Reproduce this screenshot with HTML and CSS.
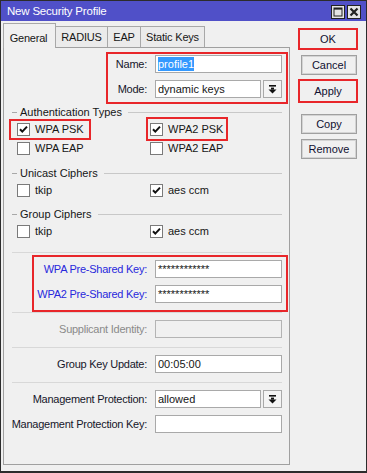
FILE: index.html
```html
<!DOCTYPE html>
<html lang="en">
<head>
    <meta charset="UTF-8">
    <title>New Security Profile</title>
    <link rel="stylesheet" href="styles.css">
</head>
<body>
    <div class="window">
        <div class="titlebar">
            <span class="title">New Security Profile</span>
            <div class="title-btns">
                <span class="tbtn"><svg width="12" height="12" viewBox="0 0 12 12"><rect x="2" y="2" width="8" height="8" fill="none" stroke="#222" stroke-width="1"/><rect x="2" y="2" width="8" height="1.6" fill="#222"/></svg></span>
                <span class="tbtn"><svg width="12" height="12" viewBox="0 0 12 12"><path d="M2.5 2.5 L9.5 9.5 M9.5 2.5 L2.5 9.5" stroke="#222" stroke-width="2.2"/></svg></span>
            </div>
        </div>

        <div class="body">
            <div class="main">
                <div class="tabs">
                    <div class="tab active" style="width:53px">General</div>
                    <div class="tab" style="width:53px">RADIUS</div>
                    <div class="tab" style="width:34px">EAP</div>
                    <div class="tab" style="width:65px">Static Keys</div>
                </div>

                <div class="panel">
                    <!-- name / mode -->
                    <div class="mark-box box-top">
                        <div class="row">
                            <label>Name:</label>
                            <div class="input"><span class="sel">profile1</span></div>
                        </div>
                        <div class="row">
                            <label>Mode:</label>
                            <div class="select">
                                <div class="input">dynamic keys</div>
                                <span class="drop"><svg width="9" height="9" viewBox="0 0 9 9"><rect x="1" y="0" width="7" height="1.6" fill="#111"/><rect x="3" y="2.6" width="3" height="2" fill="#111"/><path d="M0.5 4.4 L8.5 4.4 L4.5 8.6 Z" fill="#111"/></svg></span>
                            </div>
                        </div>
                    </div>

                    <div class="group-head"><span class="dash"></span><span class="gtext">Authentication Types</span><span class="gline"></span></div>
                    <div class="checks">
                        <span class="check mark1"><span class="box on"><svg width="11" height="11" viewBox="0 0 11 11"><path d="M2 5.2 L4.3 7.6 L9 2.6" fill="none" stroke="#111" stroke-width="2"/></svg></span>WPA PSK</span>
                        <span class="check mark2"><span class="box on"><svg width="11" height="11" viewBox="0 0 11 11"><path d="M2 5.2 L4.3 7.6 L9 2.6" fill="none" stroke="#111" stroke-width="2"/></svg></span>WPA2 PSK</span>
                        <span class="check"><span class="box"></span>WPA EAP</span>
                        <span class="check"><span class="box"></span>WPA2 EAP</span>
                    </div>

                    <div class="group-head gap7"><span class="dash"></span><span class="gtext">Unicast Ciphers</span><span class="gline"></span></div>
                    <div class="checks">
                        <span class="check"><span class="box"></span>tkip</span>
                        <span class="check"><span class="box on"><svg width="11" height="11" viewBox="0 0 11 11"><path d="M2 5.2 L4.3 7.6 L9 2.6" fill="none" stroke="#111" stroke-width="2"/></svg></span>aes ccm</span>
                    </div>

                    <div class="group-head gap6"><span class="dash"></span><span class="gtext">Group Ciphers</span><span class="gline"></span></div>
                    <div class="checks">
                        <span class="check"><span class="box"></span>tkip</span>
                        <span class="check"><span class="box on"><svg width="11" height="11" viewBox="0 0 11 11"><path d="M2 5.2 L4.3 7.6 L9 2.6" fill="none" stroke="#111" stroke-width="2"/></svg></span>aes ccm</span>
                    </div>

                    <div class="sep first"></div>

                    <!-- pre-shared keys -->
                    <div class="mark-box box-keys">
                        <div class="row">
                            <label class="blue">WPA Pre-Shared Key:</label>
                            <div class="input">************</div>
                        </div>
                        <div class="row">
                            <label class="blue">WPA2 Pre-Shared Key:</label>
                            <div class="input">************</div>
                        </div>
                    </div>

                    <div class="sep flush"></div>
                    <div class="row plain">
                        <label class="gray">Supplicant Identity:</label>
                        <div class="input disabled"></div>
                    </div>

                    <div class="sep"></div>
                    <div class="row plain">
                        <label>Group Key Update:</label>
                        <div class="input">00:05:00</div>
                    </div>

                    <div class="sep"></div>
                    <div class="row plain">
                        <label>Management Protection:</label>
                        <div class="select">
                            <div class="input">allowed</div>
                            <span class="drop"><svg width="9" height="9" viewBox="0 0 9 9"><rect x="1" y="0" width="7" height="1.6" fill="#111"/><rect x="3" y="2.6" width="3" height="2" fill="#111"/><path d="M0.5 4.4 L8.5 4.4 L4.5 8.6 Z" fill="#111"/></svg></span>
                        </div>
                    </div>
                    <div class="row plain">
                        <label>Management Protection Key:</label>
                        <div class="input"></div>
                    </div>
                </div>
            </div>

            <div class="side">
                <div class="btn marked ok">OK</div>
                <div class="btn">Cancel</div>
                <div class="btn marked apply">Apply</div>
                <div class="btn spaced">Copy</div>
                <div class="btn">Remove</div>
            </div>
        </div>
    </div>
</body>
</html>
```

FILE: styles.css
```css
body { margin: 0; font-family: "Liberation Sans", Arial, sans-serif; font-size: 11px; color: #161616; background: #f0f0f0; }
.window { width: 367px; height: 473px; box-sizing: border-box; border: 1px solid #2c2c2c; border-bottom-width: 2px; background: #f0f0f0; display: flex; flex-direction: column; }

.titlebar { height: 20px; background: #5050c8; display: flex; justify-content: space-between; align-items: flex-start; padding: 0 5px 0 6px; }
.title { color: #fff; font-size: 11.5px; letter-spacing: -0.2px; line-height: 21px; }
.title-btns { display: flex; gap: 2px; padding-top: 4px; }
.tbtn { width: 14px; height: 14px; box-sizing: border-box; border: 1px solid #222; background: #e4e4e4; display: flex; align-items: center; justify-content: center; }

.body { display: flex; }
.main { margin-left: 2px; padding-top: 2px; }
.tabs { display: flex; align-items: flex-end; height: 24px; }
.tab { height: 21px; box-sizing: border-box; border: 1px solid #a8a8a8; border-bottom: none; margin-left: -1px; background: #ebebeb; text-align: center; line-height: 20px; letter-spacing: -0.2px; }
.tab:first-child { margin-left: 0; }
.tab.active { height: 25px; margin-bottom: -1px; background: #f0f0f0; position: relative; line-height: 28px; padding-right: 2px; }

.panel { width: 287px; height: 418px; box-sizing: border-box; border: 1px solid #a0a0a0; }

.mark-box { border: 2px solid #e8262a; }
.box-top { margin: 4px 1px 0 102px; padding: 1px 4px 4px 0; }
.box-keys { margin: 2px 1px 0 28px; padding: 3px 4px 7px 0; }

.row { display: flex; justify-content: flex-end; align-items: center; gap: 8px; height: 18px; }
.row + .row { margin-top: 7px; }
.row.plain { margin-top: 7px; padding-right: 7px; }
.row label { white-space: nowrap; letter-spacing: -0.25px; color: #16162a; }
.row label.blue { color: #2828dc; }
.row label.gray { color: #8a8a8a; }

.input { width: 127px; height: 18px; box-sizing: border-box; border: 1px solid #a9a9a9; background: #fff; padding-left: 2px; line-height: 16px; white-space: nowrap; overflow: hidden; }
.input.disabled { background: #f0f0f0; border-color: #b4b4b4; }
.sel { background: #3399ff; color: #fff; display: inline-block; line-height: 14px; }
.select { display: flex; gap: 2px; width: 127px; }
.select .input { width: 106px; }
.drop { width: 19px; height: 18px; box-sizing: border-box; border: 1px solid #a9a9a9; background: #f4f4f4; display: flex; align-items: center; justify-content: center; }

.group-head { display: flex; align-items: center; height: 16px; margin: 0 7px 0 8px; }
.gap7 { margin-top: 7px; }
.gap6 { margin-top: 6px; }
.dash { width: 5px; height: 1px; background: #a8a8a8; margin-right: 3px; }
.gline { flex: 1; height: 1px; background: #c8c8c8; margin-left: 6px; }

.checks { display: grid; grid-template-columns: 133px auto; grid-auto-rows: 19px; align-items: center; padding-left: 13px; }
.check { display: inline-flex; align-items: center; gap: 5px; justify-self: start; line-height: 13px; }
.box { width: 13px; height: 13px; box-sizing: border-box; border: 1px solid #7a7a7a; background: #fff; display: flex; align-items: center; justify-content: center; }
.mark1 { border: 2px solid #e8262a; padding: 2px 5px 2px 6px; margin: -4px -7px -4px -8px; }
.mark2 { border: 2px solid #e8262a; padding: 4px 3px 3px 2px; margin: -6px -5px -5px -4px; }

.sep { height: 1px; background: #d8d8d8; margin: 9px 7px 0 8px; }
.sep.first { margin-top: 11px; }
.sep.flush { margin-top: 0; }

.side { margin-left: 11px; padding-top: 9px; display: flex; flex-direction: column; gap: 5px; }
.btn { width: 56px; height: 20px; box-sizing: border-box; border: 1px solid #a0a0a0; box-shadow: inset 0 0 0 1px #d4d4d4; background: #f0f0f0; text-align: center; line-height: 18px; color: #101030; }
.btn.marked { border: 2px solid #e8262a; box-shadow: none; width: 60px; margin-left: -3px; }
.btn.ok { height: 22px; margin-top: -2px; line-height: 19px; }
.btn.apply { height: 24px; margin-top: -1px; line-height: 21px; }
.btn.spaced { margin-top: 6px; }
```
